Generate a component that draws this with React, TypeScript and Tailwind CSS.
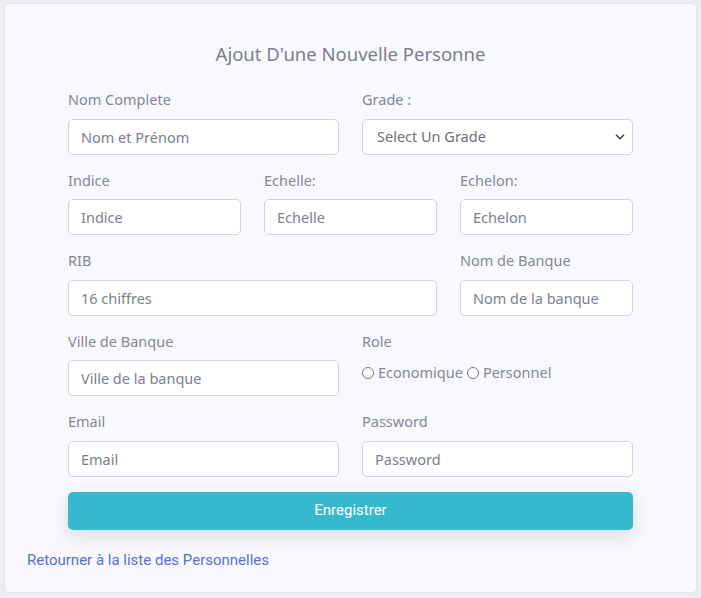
import { ChevronDown } from 'lucide-react';

const body = { fontFamily: '"Noto Sans", "Open Sans", sans-serif' };
const alt = { fontFamily: 'Roboto, "Liberation Sans", sans-serif' };

type FieldProps = { label: string; placeholder: string; className?: string };

function Field({ label, placeholder, className = '' }: FieldProps) {
  return (
    <div className={className}>
      <label className="block text-[14.5px] leading-[22.5px] mb-2 text-[#858796]">{label}</label>
      <input
        placeholder={placeholder}
        className="w-full h-[36px] px-3 bg-white border border-[#d1d3e2] rounded-[5px] text-[14.5px] text-[#7d7f8c] placeholder:text-[#7d7f8c] outline-none"
      />
    </div>
  );
}

export default function App() {
  return (
    <div className="w-[701px] h-[598px] bg-[#eceef3] pt-[3px] pl-[4px] pr-[4px] pb-[5px]" style={body}>
      <div className="h-full bg-[#f8f9fc] border border-[#e3e6f0] rounded-[5px] px-[22px] pt-[36px]">
        <h1 className="text-center text-[18.5px] leading-[28px] text-[#7b7e8c] mb-[20px]">Ajout D'une Nouvelle Personne</h1>

        <form className="mx-[41px]">
          <div className="grid grid-cols-2 gap-x-[23px] mb-[14px]">
            <Field label="Nom Complete" placeholder="Nom et Prénom" />
            <div>
              <label className="block text-[14.5px] leading-[22.5px] mb-2 text-[#858796]">Grade :</label>
              <div className="relative">
                <select className="w-full h-[36px] pl-[14px] pr-8 bg-white border border-[#d1d3e2] rounded-[5px] text-[14.5px] text-[#6e707e] appearance-none outline-none">
                  <option>Select Un Grade</option>
                </select>
                <ChevronDown className="absolute right-[6px] top-[11px] w-[14px] h-[14px] text-[#4a4c57]" strokeWidth={3} />
              </div>
            </div>
          </div>

          <div className="grid grid-cols-3 gap-x-[23px] mb-[14px]">
            <Field label="Indice" placeholder="Indice" />
            <Field label="Echelle:" placeholder="Echelle" />
            <Field label="Echelon:" placeholder="Echelon" />
          </div>

          <div className="grid grid-cols-3 gap-x-[23px] mb-[14px]">
            <Field label="RIB" placeholder="16 chiffres" className="col-span-2" />
            <Field label="Nom de Banque" placeholder="Nom de la banque" />
          </div>

          <div className="grid grid-cols-2 gap-x-[23px] mb-[14px]">
            <Field label="Ville de Banque" placeholder="Ville de la banque" />
            <div>
              <label className="block text-[14.5px] leading-[22.5px] mb-[10px] text-[#858796]">Role</label>
              <div className="flex items-center text-[14.5px] text-[#858796]">
                <input type="radio" name="role" className="w-[12px] h-[12px] mr-[4px] accent-[#555]" />
                <span className="mr-[4px]">Economique</span>
                <input type="radio" name="role" className="w-[12px] h-[12px] mr-[4px] accent-[#555]" />
                <span>Personnel</span>
              </div>
            </div>
          </div>

          <div className="grid grid-cols-2 gap-x-[23px] mb-[15px]">
            <Field label="Email" placeholder="Email" />
            <Field label="Password" placeholder="Password" />
          </div>

          <button
            type="button"
            className="w-full h-[38px] bg-[#36b9cc] text-white rounded-[5px] text-[15px] shadow-[0_6px_18px_rgba(58,59,69,0.15)]"
            style={alt}
          >
            Enregistrer
          </button>
        </form>

        <div className="mt-[19px] text-[15px] text-[#5a6fd6]" style={alt}>
          Retourner à la liste des Personnelles
        </div>
      </div>
    </div>
  );
}
